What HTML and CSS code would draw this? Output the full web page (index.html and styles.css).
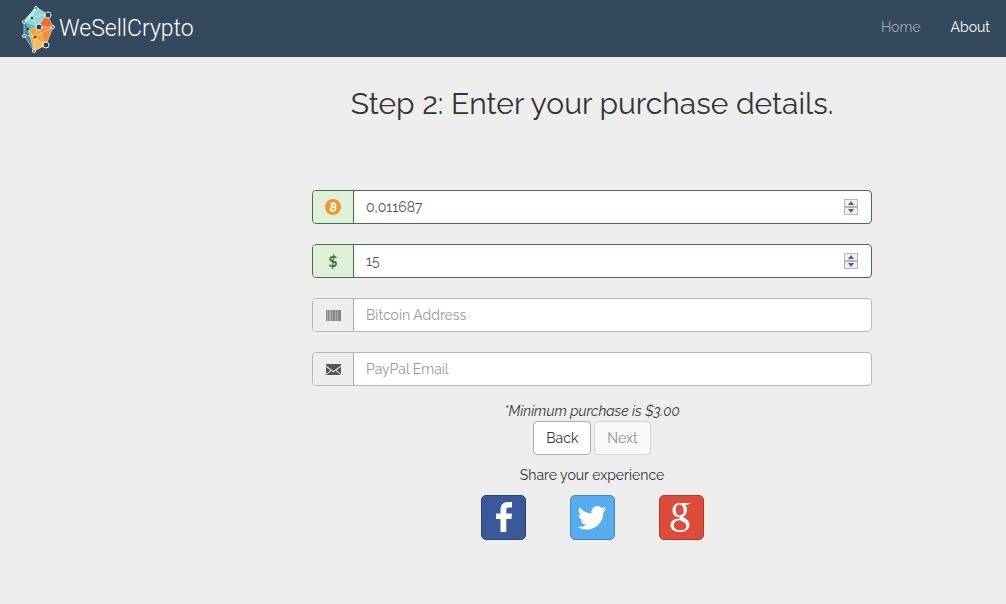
FILE: index.html
```
<!DOCTYPE html>
<html lang="en">
<head>
<meta charset="utf-8">
<meta name="viewport" content="width=device-width, initial-scale=1">
<title>WeSellCrypto</title>
<link rel="stylesheet" href="styles.css">
</head>
<body>
<header class="navbar">
  <a class="brand" href="#">
    <svg class="brand-mark" viewBox="0 0 36 50" aria-hidden="true">
      <path fill="#8ed6d8" d="M16 3 27 10 18 23 4 17z"/>
      <path fill="#59b9c6" d="M4 17 18 23 8 25z"/>
      <path fill="#b9e6e5" d="M16 3 12 14 4 17z"/>
      <path fill="#2c8fa5" d="M4 17 8 25 14 47 4 31z"/>
      <path fill="#f7a12f" d="M8 25 18 23 26 41 14 47z"/>
      <path fill="#f9bd55" d="M14 33 26 41 14 47z"/>
      <path fill="#f26a2e" d="M27 10 33 23 18 23z"/>
      <path fill="#f58d2d" d="M18 23h15l-7 18z"/>
      <path fill="none" stroke="#e6f4f5" stroke-width=".6" d="M16 3 27 10 33 23 26 41 14 47 4 31V17zM4 17 12 14 27 10M16 3 12 14 18 23 4 17M27 10 18 23h15M18 23 26 41 14 33 4 31M8 25 18 23 14 33v14M8 25l6 22M8 25l6 8 19-10"/>
      <g fill="#234357" stroke="#fff">
        <circle cx="28" cy="11" r="3"/><circle cx="19" cy="23" r="3"/><circle cx="26" cy="41" r="3"/>
        <circle cx="16" cy="4" r="1.5"/><circle cx="4" cy="18" r="1.5"/><circle cx="4" cy="32" r="1.5"/>
        <circle cx="14" cy="47" r="1.5"/><circle cx="33" cy="23" r="1.5"/>
      </g>
      <g fill="#234357"><circle cx="12" cy="14" r="1.3"/><circle cx="8" cy="25" r="1.3"/><circle cx="15" cy="33" r="1.3"/></g>
    </svg>
    <span>WeSellCrypto</span>
  </a>
  <nav class="nav">
    <a class="nav-link muted" href="#">Home</a>
    <a class="nav-link" href="#">About</a>
  </nav>
</header>

<main class="content">
  <h1 class="title">Step 2: Enter your purchase details.</h1>
  <form class="form">
    <div class="group valid">
      <label class="addon" for="btc" aria-label="Bitcoin amount">
        <svg width="16" height="16" viewBox="0 0 16 16" aria-hidden="true">
          <circle cx="8" cy="8" r="8" fill="#f0962a"/>
          <g fill="none" stroke="#fff" stroke-width="1.6" transform="rotate(12 8 8)"><path d="M5 4.7h3.7a1.6 1.6 0 0 1 0 3.2H6.5h2.7a1.7 1.7 0 0 1 0 3.4H5M6.5 4.7v6.6"/><path stroke-width="1" d="M7 3v2M9 3v2M7 11v2M9 11v2"/></g>
        </svg>
      </label>
      <input class="field" id="btc" type="text" inputmode="decimal" value="0,011687">
      <div class="spinner">
        <button class="step" type="button" aria-label="Increase bitcoin"><svg viewBox="0 0 6 4"><path d="M3 0 6 4H0z"/></svg></button>
        <button class="step" type="button" aria-label="Decrease bitcoin"><svg viewBox="0 0 6 4"><path d="M0 0h6L3 4z"/></svg></button>
      </div>
    </div>
    <div class="group valid">
      <label class="addon dollar" for="usd">$</label>
      <input class="field" id="usd" type="text" inputmode="decimal" value="15">
      <div class="spinner">
        <button class="step" type="button" aria-label="Increase dollars"><svg viewBox="0 0 6 4"><path d="M3 0 6 4H0z"/></svg></button>
        <button class="step" type="button" aria-label="Decrease dollars"><svg viewBox="0 0 6 4"><path d="M0 0h6L3 4z"/></svg></button>
      </div>
    </div>
    <div class="group">
      <label class="addon" for="address" aria-label="Bitcoin Address">
        <svg width="15" height="11" viewBox="0 0 15 11" aria-hidden="true"><path fill="#b0b0b0" d="M0 0h15v11H0z"/><path fill="#858585" d="M0 0h1v11H0zM2 0h1v11H2zM5 0h1v11H5zM7 0h2v11H7zM10 0h1v11h-1zM12 0h3v11h-3z"/></svg>
      </label>
      <input class="field" id="address" type="text" placeholder="Bitcoin Address">
    </div>
    <div class="group">
      <label class="addon" for="email" aria-label="PayPal Email">
        <svg width="15" height="11" viewBox="0 0 15 11" aria-hidden="true"><path fill="#555" d="M0 0h15v1.500L7.500 7 0 1.500zM0 2.800 4.600 6.200 0 10zM15 2.800V10l-4.600-3.800zM0 11 5.400 6.800 7.500 8.300 9.600 6.800 15 11z"/></svg>
      </label>
      <input class="field" id="email" type="email" placeholder="PayPal Email">
    </div>
    <p class="note">*Minimum purchase is $3.00</p>
    <div class="actions">
      <button class="btn" type="button">Back</button>
      <button class="btn" type="submit" disabled>Next</button>
    </div>
  </form>
  <p class="share-title">Share your experience</p>
  <div class="share">
    <a class="social facebook" href="#" aria-label="Facebook">
      <svg viewBox="0 0 45 45"><path fill="#fff" d="M19.500 37V24H15v-5.500h4.500V15c0-5 2.500-8 7.500-8h4v5.500h-3c-2.200 0-2.700.9-2.700 2.800v3.200H31L30.400 24h-5.100v13z"/></svg>
    </a>
    <a class="social twitter" href="#" aria-label="Twitter">
      <svg viewBox="0 0 45 45"><path fill="#fff" transform="translate(7.500 8.500) scale(1.200)" d="M23.950 4.570a10 10 0 0 1-2.820.77 4.960 4.960 0 0 0 2.160-2.720c-.95.550-2 .95-3.120 1.180a4.920 4.920 0 0 0-8.390 4.490C7.690 8.090 4.070 6.130 1.640 3.160a4.930 4.930 0 0 0 1.520 6.570 4.900 4.900 0 0 1-2.230-.61v.06a4.920 4.920 0 0 0 3.950 4.830 5 5 0 0 1-2.210.08 4.940 4.940 0 0 0 4.600 3.420A9.870 9.870 0 0 1 0 19.540a13.990 13.990 0 0 0 7.550 2.210c9.050 0 14-7.500 14-13.980 0-.21 0-.42-.02-.63a9.940 9.940 0 0 0 2.460-2.550z"/></svg>
    </a>
    <a class="social google" href="#" aria-label="Google">
      <svg viewBox="0 0 45 45"><g fill="#fff" fill-rule="evenodd"><path d="M21 8c-5 0-7.500 3.500-7.500 7.500 0 4.200 3 6.800 7 6.800s7.500-2.600 7.500-7.300c0-4-2.500-7-7-7zm-.6 1.600c2.800 0 4.300 3.400 4.300 6.400 0 2.800-1.300 4.700-3.800 4.700-2.800 0-4.200-3.200-4.200-6.200 0-2.800 1.200-4.900 3.700-4.900z"/><path d="M20 23.500c-5.500.2-8.500 3-8.500 6.700 0 4 4 6.800 9.500 6.800 6 0 9.500-3.200 9.500-7.300 0-5.700-6.900-6.500-6.900-9.200 0-.8.700-1.500 1.400-2.300l-2.800 1.600c-2 1.800-1.800 2.600-1 3.700zm.9 1.700c3.400 1.500 6.500 2.900 6.500 5.700 0 2.700-2.100 4.400-6 4.400-4 0-6.700-2.100-6.700-5 0-3 2.500-5 6.200-5.100z"/><path d="M21 8h10.500L29 9.700h-4z"/></g></svg>
    </a>
  </div>
</main>
</body>
</html>
```
FILE: styles.css
```
* {
  box-sizing: border-box;
}

body {
  margin: 0;
  min-height: 100vh;
  background: #eee;
  color: #333;
  font: 14px/20px Raleway, Lato, sans-serif;
}

.navbar {
  display: flex;
  align-items: center;
  justify-content: space-between;
  height: 57px;
  padding: 0 16px 0 20px;
  background: #34495e;
}

.brand {
  display: flex;
  align-items: center;
  gap: 3px;
  color: #fff;
  font: 300 23px/30px Roboto, sans-serif;
  text-decoration: none;
}

.brand-mark {
  width: 36px;
  height: 50px;
}

.nav {
  display: flex;
  gap: 30px;
  padding-bottom: 3px;
}

.nav-link {
  color: #fff;
  text-decoration: none;
}

.muted {
  color: #a2a9af;
}

.content {
  display: flex;
  flex-direction: column;
  padding: 27px 134px 40px 312px;
  text-align: center;
}

.title {
  margin: 0 0 66px;
  font-size: 30px;
  font-weight: 400;
  line-height: 40px;
}

.group {
  display: flex;
  height: 34px;
  margin-bottom: 20px;
  overflow: hidden;
  border: 1px solid #b4b7bd;
  border-radius: 4px;
  background: #fff;
}

.addon {
  display: flex;
  flex: none;
  align-items: center;
  justify-content: center;
  width: 41px;
  border-right: 1px solid #a9adb8;
  background: #eee;
}

.valid {
  border-color: #3c763d;
}

.valid .addon {
  border-color: #3c763d;
  background: #dff0d8;
}

.dollar {
  color: #3c763d;
  font: 700 16px/20px Lato, sans-serif;
}

.field {
  flex: 1;
  min-width: 0;
  padding: 0 12px;
  border: 0;
  outline: 0;
  background: none;
  color: #555;
  font: inherit;
}

.field::placeholder {
  color: #999;
  opacity: 1;
}

.spinner {
  display: flex;
  flex-direction: column;
  align-self: center;
  width: 14px;
  margin-right: 13px;
}

.step {
  display: flex;
  align-items: center;
  justify-content: center;
  height: 8px;
  padding: 0;
  border: 1px solid #b5b5b8;
  background: #f0f0f2;
}

.step svg {
  width: 6px;
  height: 4px;
  fill: #5a5a8c;
}

.note {
  margin: -5px 0 0;
  font-style: italic;
}

.actions {
  display: flex;
  justify-content: center;
  gap: 3px;
}

.btn {
  height: 34px;
  padding: 0 12px;
  border: 1px solid #adadad;
  border-radius: 4px;
  background: #fff;
  color: #333;
  font: inherit;
}

.btn:disabled {
  border-color: #d4d4d4;
  background: #f9f9f9;
  color: #909090;
}

.share-title {
  margin: 10px 0;
}

.share {
  display: flex;
  justify-content: center;
  gap: 44px;
}

.social {
  display: flex;
  align-items: center;
  justify-content: center;
  width: 45px;
  height: 45px;
  border: 1px solid;
  border-radius: 5px;
}

.social svg {
  flex: none;
  width: 45px;
  height: 45px;
}

.facebook {
  border-color: #2d4373;
  background: #3b5998;
}

.twitter {
  border-color: #4388b8;
  background: #55acee;
}

.google {
  border-color: #b43a2b;
  background: #dd4b39;
}
```
